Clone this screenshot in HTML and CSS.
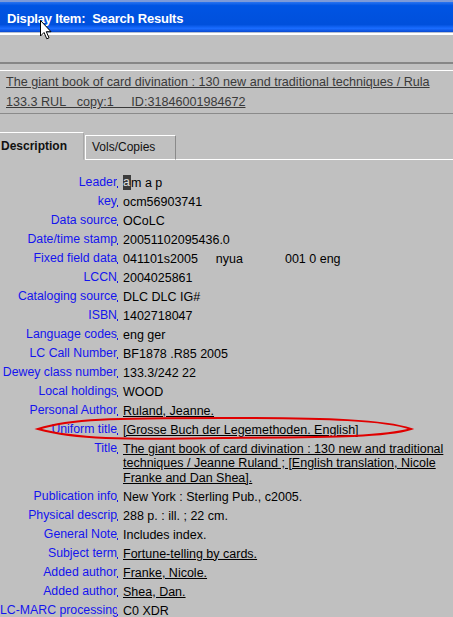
FILE: index.html
```html
<!DOCTYPE html>
<html lang="en">
<head>
    <meta charset="UTF-8">
    <title>Display Item: Search Results</title>
    <link rel="stylesheet" href="styles.css">
</head>
<body>
    <div class="titlebar">Display Item:&nbsp; Search Results</div>
    <div class="toolbar"></div>

    <div class="record-head">
        <div class="head-line">The giant book of card divination : 130 new and traditional techniques / Rula</div>
        <div class="head-line">133.3 RUL&nbsp;&nbsp;&nbsp;copy:1&nbsp;&nbsp;&nbsp;&nbsp;&nbsp;ID:31846001984672</div>
    </div>

    <div class="tabs">
        <div class="tab active">Description</div>
        <div class="tab">Vols/Copies</div>
        <div class="tab-rest"></div>
    </div>

    <div class="fields">
        <div class="field"><div class="label"><span>Leader</span></div><div class="value"><span class="caret">a</span>m a p</div></div>
        <div class="field"><div class="label"><span>key</span></div><div class="value">ocm56903741</div></div>
        <div class="field"><div class="label"><span>Data source</span></div><div class="value">OCoLC</div></div>
        <div class="field"><div class="label"><span>Date/time stamp</span></div><div class="value">20051102095436.0</div></div>
        <div class="field"><div class="label"><span>Fixed field data</span></div><div class="value">041101s2005<span class="gap-a">nyua</span><span class="gap-b">001 0 eng</span></div></div>
        <div class="field"><div class="label"><span>LCCN</span></div><div class="value">2004025861</div></div>
        <div class="field"><div class="label"><span>Cataloging source</span></div><div class="value">DLC DLC IG#</div></div>
        <div class="field"><div class="label"><span>ISBN</span></div><div class="value">1402718047</div></div>
        <div class="field"><div class="label"><span>Language codes</span></div><div class="value">eng ger</div></div>
        <div class="field"><div class="label"><span>LC Call Number</span></div><div class="value">BF1878 .R85 2005</div></div>
        <div class="field"><div class="label"><span>Dewey class number</span></div><div class="value">133.3/242 22</div></div>
        <div class="field"><div class="label"><span>Local holdings</span></div><div class="value">WOOD</div></div>
        <div class="field"><div class="label"><span>Personal Author</span></div><div class="value link">Ruland, Jeanne.</div></div>
        <div class="field"><div class="label"><span>Uniform title</span></div><div class="value link">[Grosse Buch der Legemethoden. English]</div></div>
        <div class="field"><div class="label"><span>Title</span></div><div class="value link">The giant book of card divination : 130 new and traditional <br>techniques / Jeanne Ruland ; [English translation, Nicole <br>Franke and Dan Shea].</div></div>
        <div class="field"><div class="label"><span>Publication info</span></div><div class="value">New York : Sterling Pub., c2005.</div></div>
        <div class="field"><div class="label"><span>Physical descrip</span></div><div class="value">288 p. : ill. ; 22 cm.</div></div>
        <div class="field"><div class="label"><span>General Note</span></div><div class="value">Includes index.</div></div>
        <div class="field"><div class="label"><span>Subject term</span></div><div class="value link">Fortune-telling by cards.</div></div>
        <div class="field"><div class="label"><span>Added author</span></div><div class="value link">Franke, Nicole.</div></div>
        <div class="field"><div class="label"><span>Added author</span></div><div class="value link">Shea, Dan.</div></div>
        <div class="field"><div class="label"><span>LC-MARC processing</span></div><div class="value">C0 XDR</div></div>
    </div>

    <!-- red marker drawn round the uniform title -->
    <svg class="marker" width="453" height="617" viewBox="0 0 453 617">
        <path d="M38 429 C70 419 110 418 224 418 C330 418 385 420 411 429 C385 437 330 437 224 438 C120 440 75 439 38 429 Z" fill="none" stroke="#e00000" stroke-width="2"/>
    </svg>

    <svg class="cursor" width="13" height="20" viewBox="0 0 13 20">
        <path d="M0.5 0.5 L0.5 16 L4 12.5 L6.8 18.8 L9 17.8 L6.3 11.7 L11 11.7 Z" fill="#fff" stroke="#000" stroke-width="1"/>
    </svg>
</body>
</html>
```

FILE: styles.css
```css
body {
    font-family: 'Liberation Sans', Arial, sans-serif;
    margin: 0;
    padding: 0;
    background-color: #c0c0c0;
    width: 453px;
    height: 617px;
    overflow: hidden;
    position: relative;
}
.titlebar {
    height: 27px;
    padding-top: 3px;
    border-top: 2px solid #7d9ad8;
    border-bottom: 1px solid #b8c0d0;
    background: linear-gradient(to bottom, #2a74f0 0%, #0054e3 12%, #0050dc 75%, #1a6cff 88%, #0a4ad0 100%);
    color: #fff;
    font-weight: bold;
    font-size: 13px;
    line-height: 27px;
    padding-left: 7px;
    letter-spacing: -0.2px;
}
.toolbar {
    height: 27px;
    border-top: 2px solid #fff;
    border-bottom: 2px solid #868686;
}
.record-head {
    margin-top: 6px;
    border-top: 1px solid #fff;
    border-bottom: 1px solid #8a8a8a;
    padding: 1px 0 1px 6px;
}
.head-line {
    height: 20px;
    line-height: 20px;
    font-size: 12.6px;
    color: #3a3a3a;
    text-decoration: underline;
    white-space: nowrap;
}
.tabs {
    display: flex;
    align-items: flex-end;
    margin-top: 20px;
    height: 26px;
}
.tab {
    font-size: 12px;
    height: 23px;
    line-height: 23px;
    width: 83px;
    padding-left: 6px;
    border-top: 1px solid #fff;
    border-left: 1px solid #fff;
    border-right: 1px solid #8a8a8a;
    border-bottom: 1px solid #fff;
    color: #111;
}
.tab.active {
    font-weight: bold;
    width: 82px;
    padding-left: 1px;
    height: 26px;
    line-height: 26px;
    border-left: none;
    border-bottom: 1px solid #c0c0c0;
    border-right: 1px solid #a8a8a8;
    margin-right: 1px;
}
.tab-rest {
    flex: 1;
    border-bottom: 1px solid #fff;
}
.fields {
    padding-top: 13px;
}
.field {
    display: grid;
    grid-template-columns: 118px 1fr;
    column-gap: 5px;
    padding: 2px 0;
    font-size: 12.5px;
}
.label {
    display: flex;
    justify-content: flex-end;
    color: #1414ee;
    white-space: nowrap;
    line-height: 15px;
    font-size: 12.3px;
}
.label span {
    overflow: hidden;
    min-width: 0;
}
.label::after {
    content: "";
    width: 1px;
    height: 2px;
    margin-top: 11px;
    background: #1414ee;
    flex-shrink: 0;
}
.value {
    color: #000;
    white-space: nowrap;
    line-height: 14.5px;
    padding-top: 0.5px;
}
.link {
    text-decoration: underline;
}
.caret {
    display: inline-block;
    background: #3c3c3c;
    color: #e0e0e0;
    width: 8px;
    height: 15px;
    line-height: 15px;
    vertical-align: top;
    margin-top: -1px;
}
.gap-a {
    margin-left: 18px;
}
.gap-b {
    margin-left: 42px;
}
.marker {
    position: absolute;
    left: 0;
    top: 0;
    pointer-events: none;
}
.cursor {
    position: absolute;
    left: 40px;
    top: 20px;
}
```
